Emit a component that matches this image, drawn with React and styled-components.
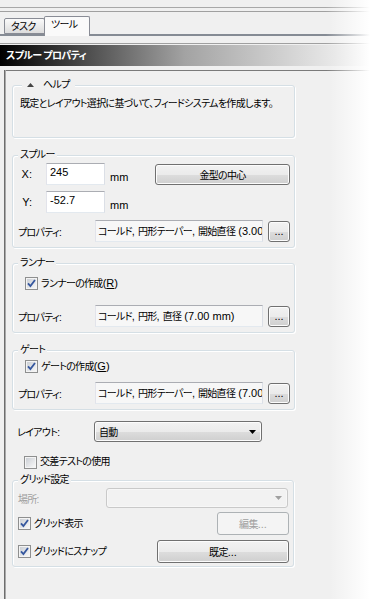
import React from 'react'
import styled, { createGlobalStyle } from 'styled-components'

const GlobalStyle = createGlobalStyle`
  body {
    margin: 0;
    background: #fff;
  }
`

const Page = styled.div`
  width: 370px;
  height: 599px;
  overflow: hidden;
  display: flex;
  flex-direction: column;
  background: linear-gradient(to right, #f0f0f0 330px, #fff 370px);
  font-family: "Liberation Sans", "Noto Sans CJK JP", sans-serif;
  font-size: 10px;
  letter-spacing: -0.7px;
  color: #000;
  font-feature-settings: "palt";
`

// ascii runs keep the wider latin metrics
const Latin = styled.span`
  font-size: 11px;
  letter-spacing: 0;
`

function Mixed({ children }) {
  return children.split(/([\x20-\x7e]+)/).map((part, i) =>
    /^[\x20-\x7e]+$/.test(part) ? <Latin key={i}>{part}</Latin> : part
  )
}

const Rule = styled.div`
  height: 1px;
  flex: none;
  margin-top: ${p => p.$mt}px;
  background: linear-gradient(to right, ${p => p.$color} 88%, rgba(255, 255, 255, 0));
`

const TabStrip = styled.div`
  display: flex;
  align-items: flex-end;
  height: 20px;
  flex: none;
  margin-top: 4px;
  padding-left: 4px;
  background: linear-gradient(to right, #858b94 88%, rgba(133, 139, 148, 0)) left bottom / 100% 2px no-repeat;
`

const Tab = styled.div`
  box-sizing: border-box;
  width: ${p => p.$w}px;
  height: ${p => (p.$active ? 20 : 16)}px;
  margin-bottom: ${p => (p.$active ? 0 : 2)}px;
  margin-left: ${p => (p.$active ? -1 : 0)}px;
  padding-left: 6px;
  line-height: ${p => (p.$active ? 16 : 15)}px;
  border: 1px solid #898c95;
  border-bottom: ${p => (p.$active ? 'none' : '1px solid #898c95')};
  border-radius: 2px 2px 0 0;
  background: ${p => (p.$active ? '#fafafa' : 'linear-gradient(#fafafa, #dcdcdc)')};
`

const Header = styled.div`
  flex: none;
  height: 21px;
  margin-top: 1px;
  padding-left: 6px;
  line-height: 21px;
  font-weight: bold;
  color: #fff;
  background: linear-gradient(to right, #000 0%, #a3a3a3 50%, #e8e8e8 90%, #fff 100%);
`

const Panel = styled.div`
  flex: 1;
  margin-top: 4px;
  margin-left: 4px;
  padding-top: 1px;
  display: flex;
  flex-direction: column;
  border-left: 1px solid #6d6d6d;
  box-shadow: inset 1px 0 #a9a9a9;
  background: linear-gradient(to right, #7a7a7a 88%, rgba(122, 122, 122, 0)) left top / 100% 1px no-repeat;
`

const Group = styled.div`
  position: relative;
  box-sizing: border-box;
  width: ${p => p.$w || 283}px;
  height: ${p => (p.$h ? `${p.$h}px` : 'auto')};
  margin-left: 7px;
  margin-top: ${p => p.$mt}px;
  padding: ${p => p.$pad};
  display: flex;
  flex-direction: column;
  border: 1px solid #d5dfe5;
  border-radius: 3px;
  box-shadow: inset 1px 1px #fff, 1px 1px #fff;
`

const Legend = styled.span`
  position: absolute;
  left: ${p => p.$left || 5}px;
  top: -8px;
  display: flex;
  align-items: center;
  gap: 9px;
  padding: 0 ${p => p.$padX || 2}px;
  line-height: 14px;
  background: #f0f0f0;
`

const HelpText = styled.div`
  padding-left: 7px;
  line-height: 14px;
  white-space: nowrap;
`

const Row = styled.div`
  display: flex;
  align-items: center;
  height: ${p => p.$h || 22}px;
  margin-top: ${p => p.$mt || 0}px;
  padding-left: ${p => p.$pl || 0}px;
  padding-right: ${p => p.$pr || 0}px;
`

const CoordLabel = styled.span`
  width: 19px;
  text-align: right;
  font-size: 11px;
  letter-spacing: 0;
`

const Label = styled.span`
  width: ${p => p.$w}px;
  flex: none;
  color: ${p => (p.$disabled ? '#a0a0a0' : '#000')};
`

const TextBox = styled.div`
  box-sizing: border-box;
  width: ${p => p.$w}px;
  height: 22px;
  margin-left: ${p => p.$ml || 0}px;
  padding: ${p => (p.$readOnly ? '3px 0 0 2px' : '1px 0 0 3px')};
  line-height: 14px;
  white-space: nowrap;
  overflow: hidden;
  border: 1px solid;
  border-color: #abadb3 #dbdfe6 #e3e9ef #e2e3ea;
  background: ${p => (p.$readOnly ? '#f7f7f7' : '#fff')};
  font-size: ${p => (p.$readOnly ? 10 : 11)}px;
  letter-spacing: ${p => (p.$readOnly ? '-0.7px' : '0')};
`

const Unit = styled.span`
  margin-left: 5px;
  padding-top: 6px;
  font-size: 11px;
  letter-spacing: 0;
`

const Button = styled.button`
  box-sizing: border-box;
  width: ${p => p.$w}px;
  height: ${p => p.$h || 21}px;
  margin-left: ${p => (p.$auto ? 'auto' : `${p.$ml || 0}px`)};
  padding: 0;
  font: inherit;
  letter-spacing: inherit;
  color: #000;
  border: 1px solid #707070;
  border-radius: 3px;
  background: linear-gradient(#f2f2f2 0%, #ebebeb 50%, #dddddd 51%, #cfcfcf 100%);
  box-shadow: inset 0 0 0 1px #fcfcfc;
  &:disabled {
    color: #a0a0a0;
    border-color: #adb2b5;
    background: #f4f4f4;
    box-shadow: none;
  }
`

const Select = styled.div`
  box-sizing: border-box;
  display: flex;
  align-items: center;
  justify-content: space-between;
  width: ${p => p.$w}px;
  height: ${p => p.$h || 21}px;
  padding: 0 5px 0 4px;
  border: 1px solid ${p => (p.$disabled ? '#c9c9c9' : '#707070')};
  border-radius: 3px;
  background: ${p => (p.$disabled
    ? '#f2f2f2'
    : 'linear-gradient(#f2f2f2 0%, #ebebeb 50%, #dddddd 51%, #cfcfcf 100%)')};
  box-shadow: inset 0 0 0 1px ${p => (p.$disabled ? '#f7f7f7' : '#fcfcfc')};
`

const CheckRow = styled.label`
  display: flex;
  align-items: center;
  gap: 3px;
  height: 16px;
  margin-top: ${p => p.$mt || 0}px;
  padding-left: ${p => p.$pl || 0}px;
  line-height: 14px;
`

const Mnemonic = styled.span`
  text-decoration: underline;
`

function Arrow({ color = '#000' }) {
  return (
    <svg width="7" height="4" viewBox="0 0 7 4">
      <polygon points="0,0 7,0 3.5,4" fill={color} />
    </svg>
  )
}

function UpArrow() {
  return (
    <svg width="7" height="4" viewBox="0 0 7 4">
      <polygon points="0,4 3.5,0 7,4" fill="#444" />
    </svg>
  )
}

function CheckBox({ checked }) {
  return (
    <svg width="13" height="13" viewBox="0 0 13 13">
      <defs>
        <linearGradient id="cbFill" x1="0" y1="0" x2="1" y2="1">
          <stop offset="0" stopColor="#cbcfd5" />
          <stop offset="1" stopColor="#f7f7f7" />
        </linearGradient>
      </defs>
      <rect x="0.5" y="0.5" width="12" height="12" fill="#f4f4f4" stroke="#8e8f8f" />
      <rect x="2" y="2" width="9" height="9" fill="url(#cbFill)" />
      {checked && (
        <path d="M3 6.3 L5.4 9 L10 3" fill="none" stroke="#35579e" strokeWidth="1.8" />
      )}
    </svg>
  )
}

function PropRow({ value, mt }) {
  return (
    <Row $pl={5} $mt={mt}>
      <Label $w={77}>プロパティ:</Label>
      <TextBox $w={168} $readOnly><Mixed>{value}</Mixed></TextBox>
      <Button $w={22} $ml={5}><Latin>...</Latin></Button>
    </Row>
  )
}

export default function App() {
  return (
    <Page>
      <GlobalStyle />
      <Rule $mt={7} $color="#a8a8a8" />
      <Rule $mt={3} $color="#a0a0a0" />
      <TabStrip>
        <Tab $w={41}>タスク</Tab>
        <Tab $w={46} $active>ツール</Tab>
      </TabStrip>
      <Rule $mt={7} $color="#a0a0a0" />
      <Header>スプルー プロパティ</Header>
      <Panel>
        <Group $mt={14} $h={53} $pad="11px 0 0 0">
          <Legend $left={9} $padX={5}>
            <UpArrow />
            <span>ヘルプ</span>
          </Legend>
          <HelpText>既定とレイアウト選択に基づいて、フィードシステムを作成します。</HelpText>
        </Group>

        <Group $mt={17} $pad="7px 0 5px 0">
          <Legend>スプルー</Legend>
          <Row $pr={4}>
            <CoordLabel>X:</CoordLabel>
            <TextBox $w={59} $ml={14}>245</TextBox>
            <Unit>mm</Unit>
            <Button $w={135} $auto>金型の中心</Button>
          </Row>
          <Row $mt={6}>
            <CoordLabel>Y:</CoordLabel>
            <TextBox $w={59} $ml={14}>-52.7</TextBox>
            <Unit>mm</Unit>
          </Row>
          <PropRow mt={7} value="コールド, 円形テーパー, 開始直径 (3.00" />
        </Group>

        <Group $mt={15} $pad="11px 0 5px 0">
          <Legend>ランナー</Legend>
          <CheckRow $pl={12}>
            <CheckBox checked />
            <span>ランナーの作成<Latin>(<Mnemonic>R</Mnemonic>)</Latin></span>
          </CheckRow>
          <PropRow mt={14} value="コールド, 円形, 直径 (7.00 mm)" />
        </Group>

        <Group $mt={17} $pad="7px 0 5px 0">
          <Legend>ゲート</Legend>
          <CheckRow $pl={12}>
            <CheckBox checked />
            <span>ゲートの作成<Latin>(<Mnemonic>G</Mnemonic>)</Latin></span>
          </CheckRow>
          <PropRow mt={8} value="コールド, 円形テーパー, 開始直径 (7.00" />
        </Group>

        <Row $mt={11} $h={21} $pl={12}>
          <Label $w={77}>レイアウト:</Label>
          <Select $w={168}>
            <span>自動</span>
            <Arrow />
          </Select>
        </Row>

        <CheckRow $mt={12} $pl={19}>
          <CheckBox />
          <span>交差テストの使用</span>
        </CheckRow>

        <Group $mt={10} $w={282} $pad="7px 0 3px 0">
          <Legend>グリッド設定</Legend>
          <Row $h={20} $pl={5}>
            <Label $w={88} $disabled>場所:</Label>
            <Select $w={182} $h={20} $disabled>
              <span />
              <Arrow color="#a0a0a0" />
            </Select>
          </Row>
          <Row $h={23} $mt={4} $pl={5} $pr={4}>
            <CheckRow>
              <CheckBox checked />
              <span>グリッド表示</span>
            </CheckRow>
            <Button $w={72} $h={23} $auto disabled>編集<Latin>...</Latin></Button>
          </Row>
          <Row $h={23} $mt={5} $pl={5} $pr={4}>
            <CheckRow>
              <CheckBox checked />
              <span>グリッドにスナップ</span>
            </CheckRow>
            <Button $w={132} $h={23} $auto>既定<Latin>...</Latin></Button>
          </Row>
        </Group>
      </Panel>
    </Page>
  )
}
